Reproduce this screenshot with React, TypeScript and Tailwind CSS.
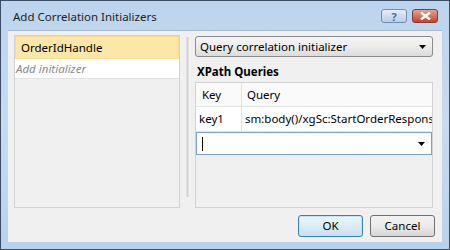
import React from "react";

const font = { fontFamily: '"Noto Sans", "Open Sans", sans-serif' };

const Arrow = () => (
  <svg width="7" height="4" viewBox="0 0 7 4">
    <path d="M0 0 L7 0 L3.5 4 Z" fill="#000" />
  </svg>
);

const TitleButtons = () => (
  <div className="flex items-start gap-[5px] pt-[8px]">
    <div className="w-[26px] h-[14px] rounded-[3px] border border-[#6d8fb3] bg-gradient-to-b from-[#e4eef9] to-[#b9cde4] flex items-center justify-center text-[11px] font-bold text-[#4a6d94] leading-none">
      ?
    </div>
    <div className="w-[26px] h-[14px] rounded-[3px] border border-[#8a3b34] bg-gradient-to-b from-[#e5a394] to-[#c4402e] flex items-center justify-center">
      <svg width="11" height="8" viewBox="0 0 11 8">
        <path d="M1 0.5 L10 7.5 M10 0.5 L1 7.5" stroke="#fff" strokeWidth="2.4" />
      </svg>
    </div>
  </div>
);

export default function App() {
  return (
    <div
      className="w-[450px] h-[250px] border border-[#3a4d62] bg-gradient-to-b from-[#bcd4ee] via-[#c7dbf1] to-[#b8d2ec] flex flex-col text-[11.5px] text-[#000]"
      style={font}
    >
      <div className="h-[29px] flex justify-between pl-[12px] pr-[11px]">
        <span className="pt-[7px] text-[11.5px] text-[#1e1e1e]">Add Correlation Initializers</span>
        <TitleButtons />
      </div>
      <div className="flex-1 mx-[7px] mb-[7px] bg-[#f0f0f0] border-t border-[#a9bdd3] flex flex-col">
        <div className="flex pl-[6px] pt-[4px] pr-[9px] gap-0">
          <div className="w-[166px] h-[173px] border border-[#d2d2d2] bg-[#f0f0f0] flex flex-col">
            <div className="h-[23px] bg-[#fce6a8] border border-[#f7dc95] flex items-center pl-[5px]">
              OrderIdHandle
            </div>
            <div className="h-[20px] bg-white border-b border-[#e2e2e2] flex items-center pl-[1px] italic text-[#8a8a8a]">
              Add initializer
            </div>
          </div>
          <div className="w-[15px] flex justify-center pt-0">
            <div className="w-[3px] h-[160px] bg-gradient-to-r from-[#e8e8e8] via-[#d3d3d3] to-[#e8e8e8] mt-[2px]" />
          </div>
          <div className="w-[238px] flex flex-col">
            <div className="h-[21px] mt-[1px] rounded-[3px] border border-[#8a8a8a] bg-gradient-to-b from-[#f5f5f5] via-[#ececec] to-[#dcdcdc] flex items-center justify-between pl-[4px] pr-[6px]">
              <span>Query correlation initializer</span>
              <Arrow />
            </div>
            <div className="h-[25px] pt-[6px] pl-[2px] font-bold">XPath Queries</div>
            <div className="h-[126px] border border-[#d2d2d2] bg-[#f0f0f0] flex flex-col">
              <div className="h-[24px] flex bg-[#fafafa] border-b border-[#e3e3e3]">
                <div className="w-[46px] border-r border-[#e3e3e3] flex items-center pl-[6px]">Key</div>
                <div className="flex-1 flex items-center pl-[5px]">Query</div>
              </div>
              <div className="h-[25px] flex bg-white border-b border-[#e3e3e3]">
                <div className="w-[46px] border-r border-[#e3e3e3] flex items-center pl-[3px]">key1</div>
                <div className="flex-1 flex items-center pl-[3px] overflow-hidden whitespace-nowrap">
                  sm:body()/xgSc:StartOrderRespons
                </div>
              </div>
              <div className="h-[23px] flex items-center justify-between bg-white border border-[#7aa3d1] pl-[5px] pr-[6px]">
                <div className="w-[1px] h-[14px] bg-black" />
                <Arrow />
              </div>
            </div>
          </div>
        </div>
        <div className="flex justify-end gap-[7px] pr-[7px] pt-[7px]">
          <div className="w-[65px] h-[22px] rounded-[3px] border border-[#3c7fb1] bg-gradient-to-b from-[#eaf6fd] via-[#dcecf7] to-[#c4e0f2] shadow-[inset_0_0_0_1px_#bfe6f8] flex items-center justify-center">
            OK
          </div>
          <div className="w-[65px] h-[22px] rounded-[3px] border border-[#707070] bg-gradient-to-b from-[#f2f2f2] via-[#ebebeb] to-[#d6d6d6] flex items-center justify-center">
            Cancel
          </div>
        </div>
      </div>
    </div>
  );
}
